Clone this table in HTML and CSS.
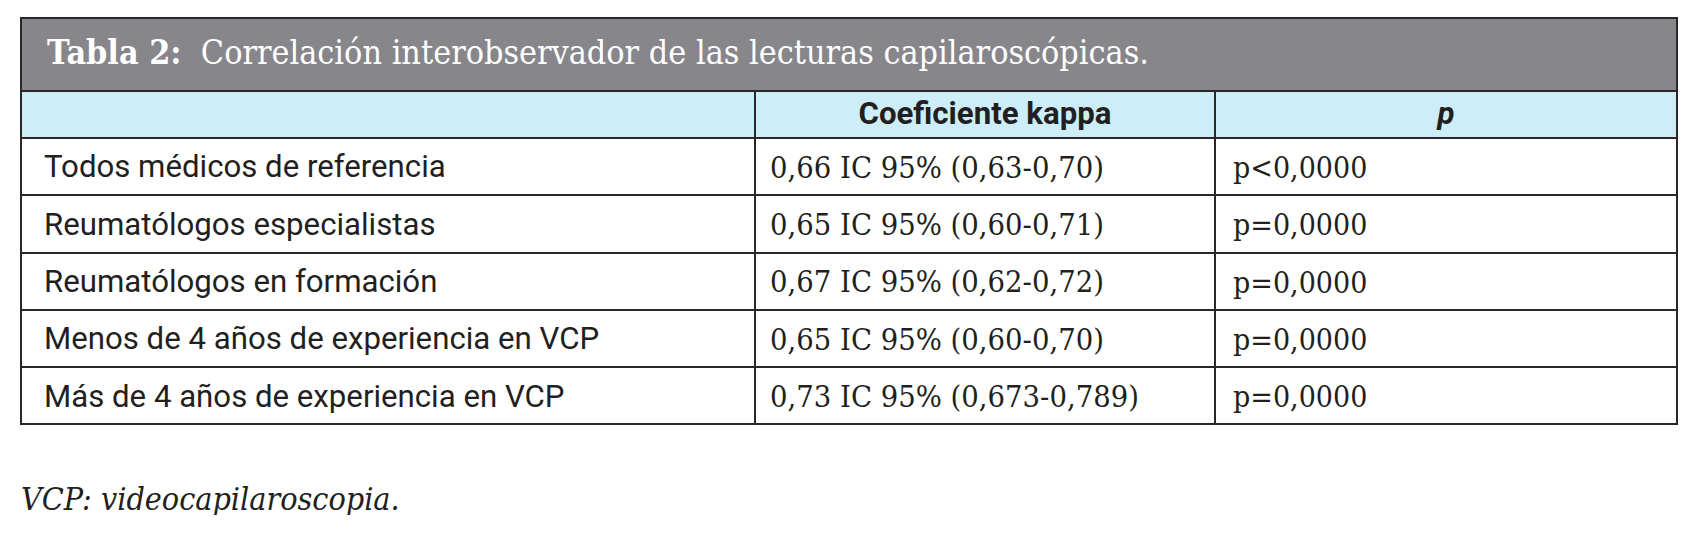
FILE: index.html
```html
<!DOCTYPE html>
<html lang="es">
<head>
<meta charset="utf-8">
<title>Tabla 2</title>
<link rel="stylesheet" href="styles.css">
</head>
<body>
<div class="page">
  <table class="data">
    <colgroup>
      <col class="c1">
      <col class="c2">
      <col class="c3">
    </colgroup>
    <thead>
      <tr class="title-row">
        <th colspan="3" class="title"><span class="title-label">Tabla 2:</span>&nbsp; Correlación interobservador de las lecturas capilaroscópicas.</th>
      </tr>
      <tr class="head-row">
        <th class="h"></th>
        <th class="h">Coeficiente kappa</th>
        <th class="h"><em class="pval">p</em></th>
      </tr>
    </thead>
    <tbody>
      <tr><td class="name">Todos médicos de referencia</td><td class="num">0,66 IC 95% (0,63-0,70)</td><td class="num pcol">p&lt;0,0000</td></tr>
      <tr><td class="name">Reumatólogos especialistas</td><td class="num">0,65 IC 95% (0,60-0,71)</td><td class="num pcol">p=0,0000</td></tr>
      <tr><td class="name">Reumatólogos en formación</td><td class="num">0,67 IC 95% (0,62-0,72)</td><td class="num pcol">p=0,0000</td></tr>
      <tr><td class="name">Menos de 4 años de experiencia en VCP</td><td class="num">0,65 IC 95% (0,60-0,70)</td><td class="num pcol">p=0,0000</td></tr>
      <tr><td class="name">Más de 4 años de experiencia en VCP</td><td class="num">0,73 IC 95% (0,673-0,789)</td><td class="num pcol">p=0,0000</td></tr>
    </tbody>
  </table>
  <p class="note">VCP: videocapilaroscopia.</p>
</div>
</body>
</html>
```

FILE: styles.css
```css
html, body {
  margin: 0;
  padding: 0;
  background: #ffffff;
}

.page {
  padding: 17px 0 0 20px;
  color: #231f20;
}

.data {
  border-collapse: collapse;
  table-layout: fixed;
  width: 1656px;
  border: 2px solid #231f20;
}

.c1 { width: 734px; }
.c2 { width: 460px; }
.c3 { width: 462px; }

.data th,
.data td {
  border: 2px solid #2b2627;
  padding: 0;
  vertical-align: middle;
}

.data .title {
  height: 68px;
  background: #87868b;
  color: #ffffff;
  text-align: left;
  padding: 0 0 3px 25px;
  font-family: "DejaVu Serif Condensed", "DejaVu Serif", serif;
  font-weight: normal;
  font-size: 33.8px;
  line-height: 1.1;
  white-space: nowrap;
}

.title-label {
  font-weight: bold;
}

.data .h {
  height: 45px;
  background: #cdeef9;
  font-family: Roboto, "Liberation Sans", sans-serif;
  font-weight: bold;
  font-size: 31.2px;
  line-height: 1.1;
  text-align: center;
}

.pval {
  font-style: italic;
}

.data tbody td {
  height: 53.3px;
  padding-top: 2px;
  line-height: 1.1;
}

.data .name {
  padding-left: 22px;
  font-family: Roboto, "Liberation Sans", sans-serif;
  font-size: 31.2px;
}

.data .num {
  padding-left: 14px;
  font-family: "DejaVu Serif Condensed", "DejaVu Serif", serif;
  font-size: 30.6px;
}

.data .pcol {
  padding-left: 17px;
  font-size: 30px;
}

.note {
  margin: 58px 0 0 1px;
  font-family: "DejaVu Serif Condensed", "DejaVu Serif", serif;
  font-style: italic;
  font-size: 32px;
  line-height: 1;
}
```
